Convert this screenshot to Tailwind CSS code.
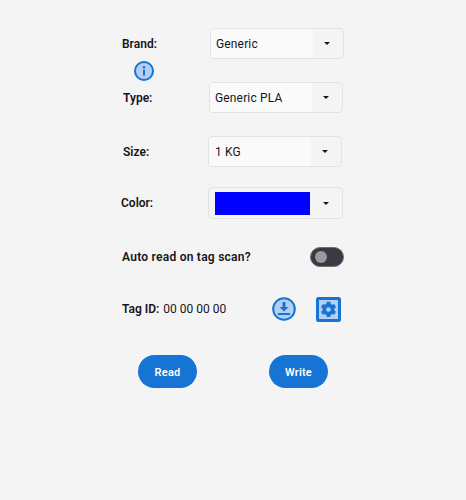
<!doctype html>
<html>
    <head>
        <meta charset="UTF-8" />
        <meta name="viewport" content="width=device-width, initial-scale=1.0" />
        <script src="https://cdn.jsdelivr.net/npm/@tailwindcss/browser@4"></script>
    </head>
    <body class="bg-[#f4f4f4] w-[466px] h-[500px] overflow-hidden font-['Roboto',sans-serif] text-[12px] text-[#16151a]">
        <main class="flex flex-col pt-[28px]">
            <!-- Brand -->
            <div class="flex items-center h-[31px] pl-[122px]">
                <span class="w-[88px] font-semibold">Brand:</span>
                <div class="flex w-[134px] h-[31px] rounded-[4px] border border-[#e2e2e2] overflow-hidden">
                    <div class="w-[102px] bg-[#fafafa] pl-[5px] flex items-center tracking-[0.15px]">Generic</div>
                    <div class="flex-1 flex items-center justify-center"><div class="w-0 h-0 border-x-[3.5px] border-x-transparent border-t-[3.5px] border-t-[#16151a] -ml-[3px]"></div></div>
                </div>
            </div>
            <div class="h-[23px] pl-[133px] pt-[1px]">
                <svg class="size-[22px]" viewBox="0 0 22 22">
                    <circle cx="11" cy="11" r="9" fill="#b3d0f2" stroke="#1574d4" stroke-width="2" />
                    <circle cx="11" cy="7.2" r="1.2" fill="#1574d4" />
                    <rect x="10" y="9.6" width="2" height="6" fill="#1574d4" />
                </svg>
            </div>
            <!-- Type -->
            <div class="flex items-center h-[31px] pl-[123px]">
                <span class="w-[86px] font-semibold">Type:</span>
                <div class="flex w-[134px] h-[31px] rounded-[4px] border border-[#e2e2e2] overflow-hidden">
                    <div class="w-[102px] bg-[#fafafa] pl-[5px] flex items-center tracking-[0.15px]">Generic PLA</div>
                    <div class="flex-1 flex items-center justify-center"><div class="w-0 h-0 border-x-[3.5px] border-x-transparent border-t-[3.5px] border-t-[#16151a] -ml-[3px]"></div></div>
                </div>
            </div>
            <!-- Size -->
            <div class="flex items-center h-[31px] pl-[123px] mt-[23px]">
                <span class="w-[85px] font-semibold">Size:</span>
                <div class="flex w-[134px] h-[31px] rounded-[4px] border border-[#e2e2e2] overflow-hidden">
                    <div class="w-[102px] bg-[#fafafa] pl-[6px] flex items-center tracking-[0.15px]">1 KG</div>
                    <div class="flex-1 flex items-center justify-center"><div class="w-0 h-0 border-x-[3.5px] border-x-transparent border-t-[3.5px] border-t-[#16151a] -ml-[3px]"></div></div>
                </div>
            </div>
            <!-- Color -->
            <div class="flex items-center h-[32px] pl-[121px] mt-[20px]">
                <span class="w-[87px] font-semibold">Color:</span>
                <div class="flex items-center w-[135px] h-[32px] rounded-[4px] border border-[#e2e2e2]">
                    <div class="w-[95px] h-[23px] bg-[#0000ff] ml-[6px]"></div>
                    <div class="flex-1 flex items-center justify-center"><div class="w-0 h-0 border-x-[3.5px] border-x-transparent border-t-[3.5px] border-t-[#16151a]"></div></div>
                </div>
            </div>
            <!-- Auto read -->
            <div class="flex items-center justify-between h-[21px] pl-[122px] pr-[122px] mt-[27px]">
                <span class="font-semibold tracking-[0.25px]">Auto read on tag scan?</span>
                <div class="flex items-center w-[34px] h-[20px] rounded-full bg-[#3a3a42] border border-[#6f6f76]">
                    <div class="size-[12px] rounded-full bg-[#99999f] ml-[4px]"></div>
                </div>
            </div>
            <!-- Tag ID -->
            <div class="flex items-center h-[26px] pl-[122px] mt-[29px]">
                <span class="font-semibold">Tag ID:</span>
                <span class="ml-[4px]">00 00 00 00</span>
                <svg class="size-[26px] ml-[45px]" viewBox="0 0 26 26">
                    <circle cx="13" cy="13" r="10.8" fill="#b3d0f2" stroke="#1574d4" stroke-width="2" />
                    <path d="M11.5 6h3v5h3l-4.5 4.5-4.5-4.5h3z" fill="#1574d4" />
                    <rect x="7" y="17" width="12" height="2" fill="#1574d4" />
                </svg>
                <svg class="size-[25px] ml-[19px]" viewBox="0 0 25 25">
                    <rect x="1.5" y="1.5" width="22" height="22" rx="1" fill="#b3d0f2" stroke="#1574d4" stroke-width="3" />
                    <path d="M10.7 4.8h3.6l.4 2.1 1.5.9 2-.7 1.8 3.1-1.6 1.3v1.9l1.6 1.3-1.8 3.1-2-.7-1.5.9-.4 2.1h-3.6l-.4-2.1-1.5-.9-2 .7-1.8-3.1 1.6-1.3v-1.9l-1.6-1.3 1.8-3.1 2 .7 1.5-.9z" fill="#1574d4" />
                    <circle cx="12.5" cy="12.5" r="2.3" fill="#b3d0f2" />
                </svg>
            </div>
            <!-- Buttons -->
            <div class="flex pl-[138px] gap-[72px] mt-[33px]">
                <button class="w-[59px] h-[33px] pt-[3px] rounded-full bg-[#1574d4] text-white text-[11px] font-semibold tracking-[0.2px]">Read</button>
                <button class="w-[59px] h-[33px] pt-[3px] rounded-full bg-[#1574d4] text-white text-[11px] font-semibold tracking-[0.2px]">Write</button>
            </div>
        </main>
    </body>
</html>
